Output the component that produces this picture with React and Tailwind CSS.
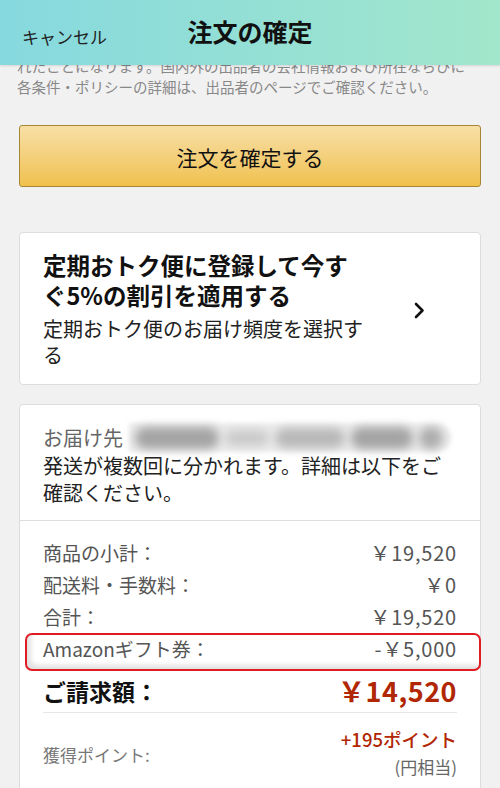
import React from "react";

const font = { fontFamily: '"Noto Sans CJK JP", "Noto Sans", sans-serif' };

const Row = ({ label, value }) => (
  <div className="flex items-center justify-between h-[32px] text-[19px] text-[#555]">
    <span>{label}</span>
    <span className="text-[20px] tracking-[0.8px]">{value}</span>
  </div>
);

const App = () => {
  return (
    <div
      className="w-[500px] h-[788px] overflow-hidden bg-[#f1f1f1]"
      style={font}
    >
      {/* header */}
      <div className="relative z-10 h-[65px] grid grid-cols-[1fr_auto_1fr] items-center bg-linear-to-r from-[#86d9df] to-[#a2e6cb] shadow-[0_1px_2px_rgba(0,0,0,0.12)]">
        <span className="pl-[22px] pt-[8px] text-[17px] text-[#222]">
          キャンセル
        </span>
        <span className="text-[25px] font-bold text-[#111] -mt-[1px]">
          注文の確定
        </span>
        <span />
      </div>

      <div className="-mt-[10px] pl-[17px] pr-[10px] text-[14.5px] leading-[21px] text-[#888] whitespace-nowrap">
        <p>れたことになります。国内外の出品者の会社情報および所在ならびに</p>
        <p>各条件・ポリシーの詳細は、出品者のページでご確認ください。</p>
      </div>

      {/* place order button */}
      <div className="mx-[19px] mt-[28px]">
        <button className="w-full h-[62px] pt-[4px] rounded-[3px] border border-[#a88734] bg-linear-to-b from-[#f7dfa5] to-[#f0c14b] text-[21px] text-[#111]">
          注文を確定する
        </button>
      </div>

      {/* subscribe & save */}
      <div className="mx-[19px] mt-[45px] bg-white border border-[#dddddd] rounded-[4px] pl-[23px] pt-[17px] pb-[16px] flex items-center">
        <div className="w-[324px]">
          <p className="text-[23.5px] leading-[30px] font-bold text-[#111]">
            定期おトク便に登録して今すぐ5%の割引を適用する
          </p>
          <p className="mt-[6px] text-[20px] leading-[26px] text-[#222]">
            定期おトク便のお届け頻度を選択する
          </p>
        </div>
        <svg
          className="ml-[47px] mt-[2px]"
          width="11"
          height="17"
          viewBox="0 0 11 17"
          fill="none"
        >
          <polyline
            points="2,2 8.5,8.5 2,15"
            stroke="#111"
            strokeWidth="2.6"
            strokeLinecap="round"
            strokeLinejoin="round"
          />
        </svg>
      </div>

      {/* summary */}
      <div className="mx-[19px] mt-[19px] bg-white border border-[#dddddd] rounded-[4px]">
        <div className="px-[23px] pt-[18px] pb-[14px] text-[20px] leading-[27px] text-[#222]">
          <div className="flex items-center">
            <span className="text-[#666]">お届け先</span>
            <div className="ml-[6px] w-[322px] h-[29px] bg-[#ececec] rounded-r-full flex items-center gap-[6px] px-[6px] blur-[2px]">
              <span className="w-[84px] h-[22px] rounded-full bg-[#a4a4a4] blur-[4px]" />
              <span className="w-[44px] h-[16px] rounded-full bg-[#cacaca] blur-[4px]" />
              <span className="w-[70px] h-[20px] rounded-full bg-[#b8b8b8] blur-[4px]" />
              <span className="w-[62px] h-[22px] rounded-full bg-[#a4a4a4] blur-[4px]" />
              <span className="w-[24px] h-[22px] rounded-full bg-[#acacac] blur-[4px]" />
            </div>
          </div>
          <p>発送が複数回に分かれます。詳細は以下をご確認ください。</p>
        </div>

        <div className="border-t border-[#dddddd] px-[23px] pt-[16px]">
          <Row label="商品の小計：" value="￥19,520" />
          <Row label="配送料・手数料：" value="￥0" />
          <Row label="合計：" value="￥19,520" />
          <div className="relative">
            <div className="absolute top-0 -bottom-[6px] -left-[18px] -right-[24px] rounded-[7px] border-2 border-[#e01b22] shadow-[inset_4px_-4px_5px_rgba(0,0,0,0.12)]" />
            <Row label="Amazonギフト券：" value="-￥5,000" />
          </div>

          <div className="mt-[8px] flex items-center justify-between h-[36px]">
            <span className="text-[23px] font-bold text-[#111]">ご請求額：</span>
            <span className="text-[27px] font-bold text-[#b12704] tracking-[0.5px]">
              ￥14,520
            </span>
          </div>

          <div className="mt-[3px] border-t border-[#e7e7e7]" />

          <div className="mt-[13px] flex items-center justify-between">
            <span className="text-[17px] text-[#777] mt-[3px]">獲得ポイント:</span>
            <div className="flex flex-col items-end leading-[27px]">
              <span className="text-[18.5px] text-[#b12704] font-medium">
                +195ポイント
              </span>
              <span className="text-[17px] text-[#666]">(円相当)</span>
            </div>
          </div>
          <div className="h-[40px]" />
        </div>
      </div>
    </div>
  );
};

export default App;
